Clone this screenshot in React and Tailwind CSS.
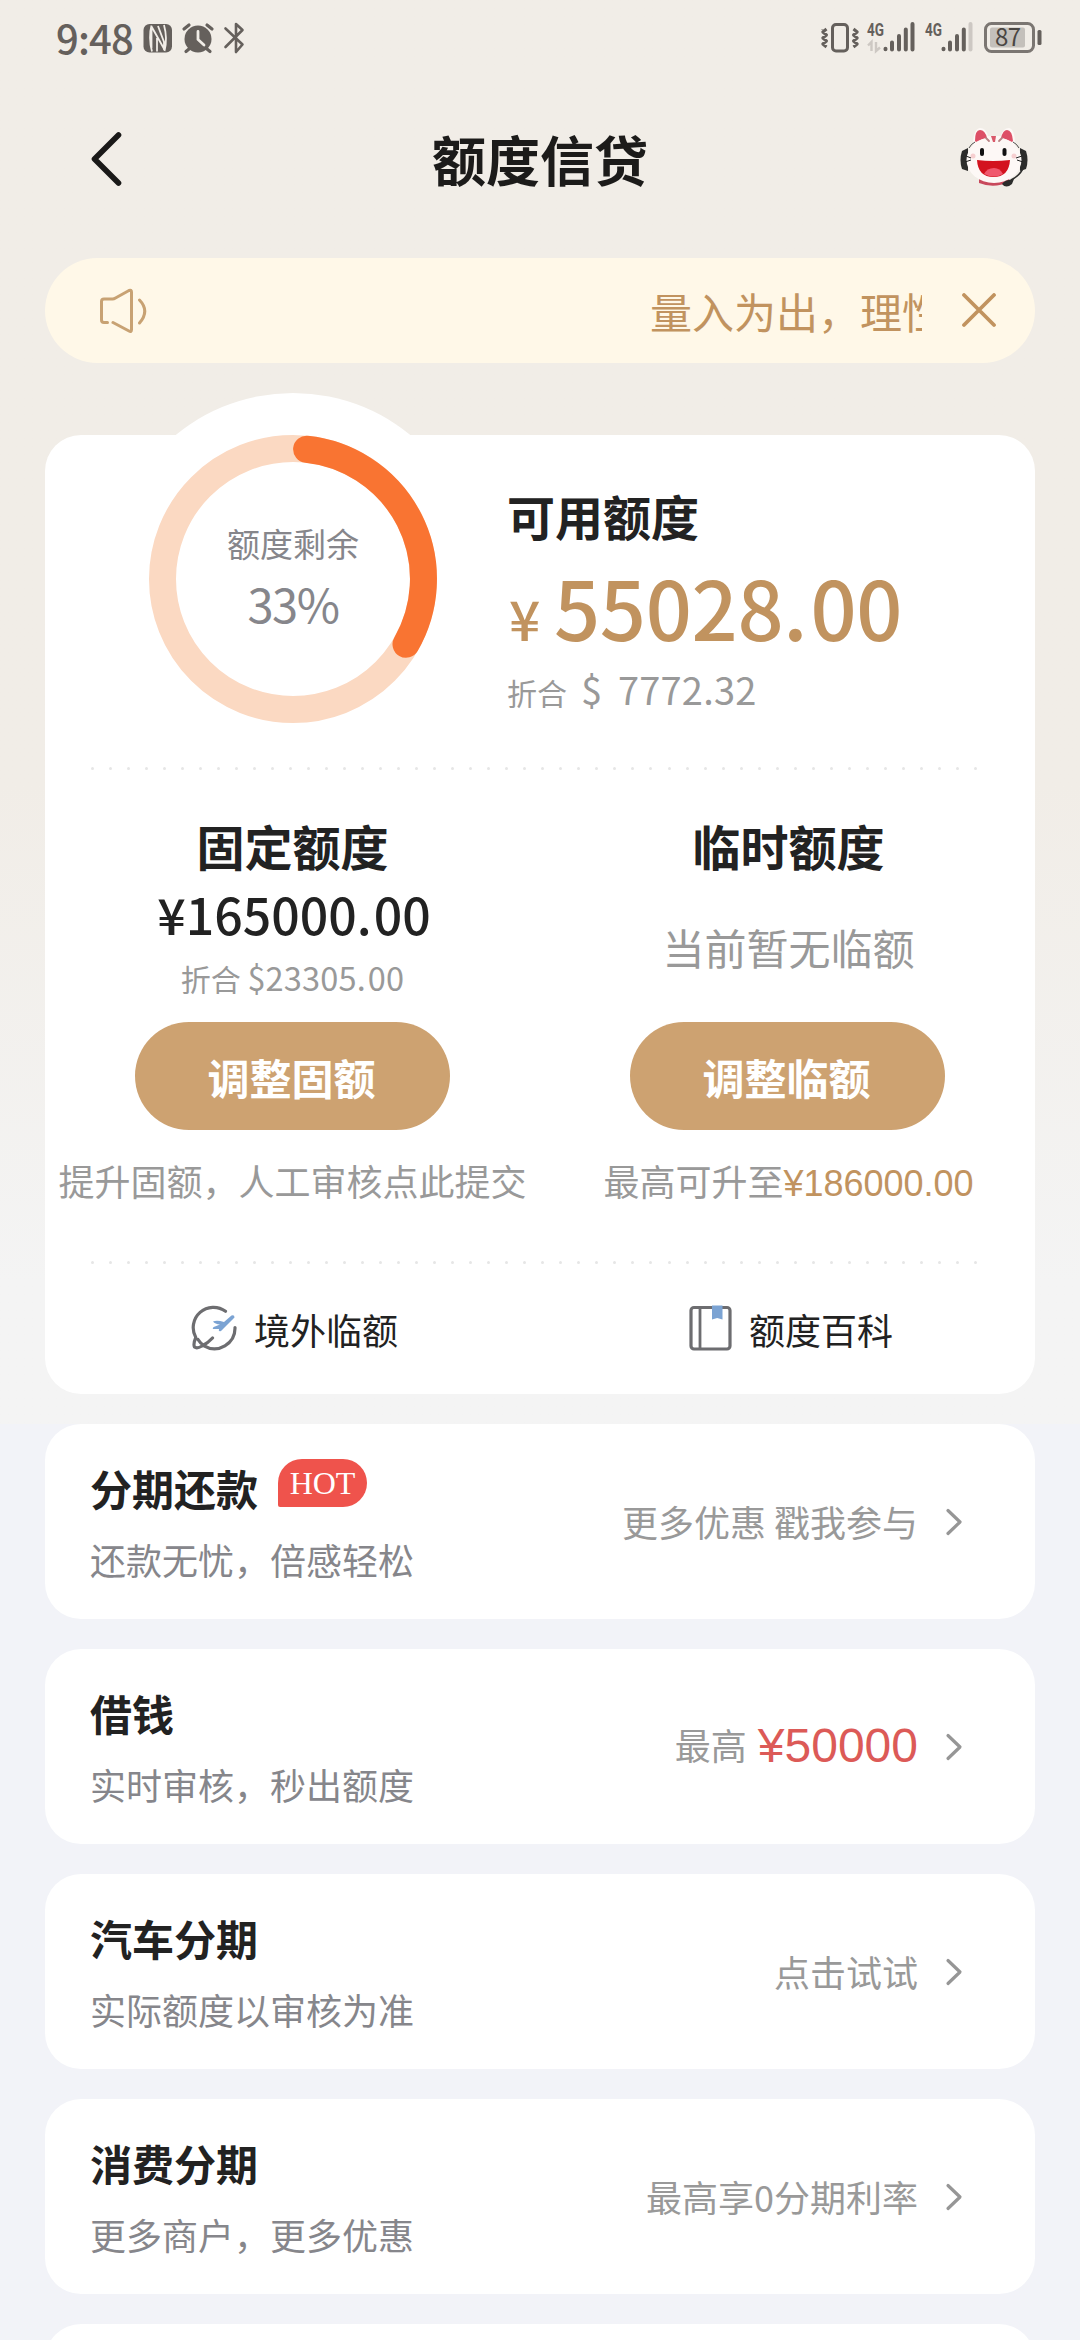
const CJK = "font-['Noto_Sans_CJK_SC',sans-serif]";

function StatusBar() {
  return (
    <div className="flex h-[76px] items-center pl-[56px] pr-[37px] text-[#65605c]">
      <span className="-mt-[2px] w-[87px] text-[40px] font-medium leading-[76px] tracking-[-0.8px]">9:48</span>
      <svg width="104" height="40" viewBox="0 0 104 40" fill="none" className="block">
        <rect x="0.5" y="6" width="28.5" height="28.5" rx="6" fill="#65605c" />
        <path d="M8.5 7.500C6.500 14 6.500 25 9 33.500M8.500 8.500L22 32.500M8.500 8.500V30M14 20V33.500M21 7C23.500 16 23.500 25 21.500 33M15 8L21 24V32" stroke="#f1ede7" strokeWidth="1.800" />
        <circle cx="55" cy="21" r="13.500" fill="#65605c" />
        <path d="M41 11L46 7M69 11L64 7M46 31L43 33.500M64 31L67 33.500" stroke="#65605c" strokeWidth="3.200" strokeLinecap="round" />
        <path d="M55 13.500V21.500L61 27" stroke="#f1ede7" strokeWidth="2.800" strokeLinecap="round" />
        <path d="M82.500 10.500L99.500 26.500L93 34V6L99.500 12L82.500 29" stroke="#65605c" strokeWidth="2.600" strokeLinejoin="round" strokeLinecap="round" />
      </svg>
      <svg width="223" height="40" viewBox="0 0 223 40" fill="none" className="ml-auto block">
        <rect x="12.500" y="6.500" width="15" height="26.500" rx="3.500" stroke="#65605c" strokeWidth="3" />
        <path d="M6.500 10L2.800 13L6.500 16L2.800 19L6.500 22L2.800 25L6.500 28M2.800 10.500V11M33.500 10L37.200 13L33.500 16L37.200 19L33.500 22L37.200 25L33.500 28" transform="translate(0 1)" stroke="#65605c" strokeWidth="3" strokeLinejoin="round" />
        <text x="47" y="18" fontSize="18.500" fontWeight="700" textLength="17" lengthAdjust="spacingAndGlyphs" fill="#65605c" fontFamily="Roboto">4G</text>
        <path d="M51.500 33V24L48 27.500M56 24V33L60 29.500" stroke="#cdc8c3" strokeWidth="2.400" />
        <path d="M65.500 30.800V31.200M72 24.500V31.500M79 18V31.500M85.800 11.500V31.500M92.500 6V31.500" stroke="#65605c" strokeWidth="4" strokeLinecap="round" />
        <text x="105" y="18" fontSize="18.500" fontWeight="700" textLength="17" lengthAdjust="spacingAndGlyphs" fill="#65605c" fontFamily="Roboto">4G</text>
        <path d="M123.500 30.800V31.200M130 24.500V31.500M137 18V31.500M143.800 11.500V31.500" stroke="#65605c" strokeWidth="4" strokeLinecap="round" />
        <path d="M150.500 6V31.500" stroke="#cdc8c3" strokeWidth="4" strokeLinecap="round" />
        <rect x="165.500" y="5.500" width="48" height="28" rx="6" stroke="#7b7672" strokeWidth="3" />
        <rect x="170" y="9.500" width="35" height="20" rx="2" fill="#c4c0bb" />
        <text x="175" y="28" fontSize="24" textLength="26" fill="#4a4643" fontFamily="Noto Sans CJK SC">87</text>
        <rect x="217.500" y="12" width="4" height="15" rx="1.500" fill="#65605c" />
      </svg>
    </div>
  );
}

function Mascot() {
  return (
    <svg width="70" height="64" viewBox="0 0 70 64" className="block">
      <path d="M3 25L9 22V45L3 43Q0 34 3 25Z" fill="#2c2c2b" />
      <path d="M67 25L61 22V45L67 43Q70 34 67 25Z" fill="#2c2c2b" />
      <path d="M14 20Q14 3 21 2Q27 2 29 10L42 10Q44 2 50 2Q56 3 56 20Z" fill="#fdf8f6" />
      <path d="M16 15Q16 4 21 4Q26 4 28 12Q22 13 17 16Z" fill="#dd4f66" />
      <path d="M54 15Q53 4 48 4Q44 4 42 12Q48 13 53 16Z" fill="#dd4f66" />
      <path d="M20 52Q34 60 50 52V56Q35 63 20 57Z" fill="#c8495c" />
      <ellipse cx="35" cy="34" rx="27.500" ry="23" fill="#fdf8f6" />
      <path d="M32 10H37L36 16H34Z" fill="#d9596a" />
      <path d="M27 12L30 15M43 12L40 15" stroke="#b98284" strokeWidth="1.800" strokeLinecap="round" />
      <rect x="21" y="22" width="4" height="8" rx="2" fill="#111" />
      <rect x="43.500" y="22" width="4" height="8" rx="2" fill="#111" />
      <circle cx="14" cy="30" r="2.500" fill="#f6cfd0" />
      <circle cx="55" cy="30" r="2.500" fill="#f6cfd0" />
      <path d="M18 34Q34 36 51 34Q50 51 34.500 51Q19 51 18 34Z" fill="#d3131f" />
      <path d="M25 48Q28 42 35 42Q41 42 44 48Q35 53 25 48Z" fill="#f0586d" />
      <path d="M7 30L12 32M6 36L12 34M63 30L57 32M64 36L58 34" stroke="#222" strokeWidth="1" />
      <path d="M10 22Q12 18 16 16M60 22Q58 18 54 16" stroke="#222" strokeWidth="0.800" fill="none" />
      <path d="M65 40Q62 49 52 54" stroke="#2c2c2b" strokeWidth="1.600" fill="none" />
      <path d="M43 58Q45 54 55 53L53 58Q47 63 43 58Z" fill="#2c2c2b" />
    </svg>
  );
}

function Header() {
  return (
    <header className="grid h-[182px] grid-cols-3 items-start pl-[90px] pr-[51px] pt-[50px]">
      <svg width="34" height="66" viewBox="0 0 34 66" fill="none" className="block">
        <path d="M28.500 9L4.500 33L28.500 57" stroke="#1a1918" strokeWidth="5.600" strokeLinecap="round" strokeLinejoin="round" />
      </svg>
      <h1 className="whitespace-nowrap pr-[39px] text-center text-[54px] font-bold leading-[66px] text-[#1c1b1a]">额度信贷</h1>
      <div className="flex justify-end">
        <Mascot />
      </div>
    </header>
  );
}

function Notice() {
  return (
    <div className="flex h-[105px] items-center rounded-full bg-[#fff8e8] pl-[53px] pr-[38px] text-[#c1935f]">
      <svg width="52" height="50" viewBox="0 0 52 50" fill="none" className="block shrink-0">
        <path d="M9.500 36.500H6Q3.500 36.500 3.500 34V15.500Q3.500 13 6 13H14.500Q16 13 17.500 12L31 4.500Q33.500 3.500 33.500 6V43.500Q33.500 46.500 31 45L15 36.500M41.500 14Q52 25 41.500 37" stroke="#c8a273" strokeWidth="3" strokeLinecap="round" strokeLinejoin="round" />
      </svg>
      <div className="ml-auto w-[272px] overflow-hidden whitespace-nowrap text-[42px] leading-[105px]">量入为出，理性消费</div>
      <svg width="36" height="36" viewBox="0 0 36 36" fill="none" className="ml-[39px] block shrink-0">
        <path d="M3 2L33 32M33 2L3 32" stroke="#c1935f" strokeWidth="3.800" strokeLinecap="round" />
      </svg>
    </div>
  );
}

function Ring() {
  return (
    <div className="relative h-[370px] w-[370px] shrink-0 rounded-full bg-white">
      <svg width="370" height="370" viewBox="0 0 370 370" fill="none" className="block">
        <circle cx="185" cy="186" r="130.500" stroke="#fbd9c2" strokeWidth="27" />
        <path d="M198.600 56.200A130.500 130.500 0 0 1 298 251.200" stroke="#f97432" strokeWidth="27" strokeLinecap="round" />
      </svg>
      <div className="absolute inset-0 text-center text-[#86868b]">
        <div className="pt-[122px] text-[33px] leading-[56px]">额度剩余</div>
        <div className="text-[47px] leading-[64px] tracking-[-1.5px]">33%</div>
      </div>
    </div>
  );
}

function Dots() {
  return (
    <div className="flex h-[4px] w-[886px] items-center justify-between">
      {Array.from({ length: 50 }, (_, i) => (
        <span key={i} className="size-[3px] rounded-full bg-[#e6e6e6]" />
      ))}
    </div>
  );
}

function Pill({ children }) {
  return (
    <button className="block h-[108px] w-[315px] rounded-full bg-[#cda271] pr-[2px] text-[42px] font-bold leading-[105px] text-white">
      {children}
    </button>
  );
}

function LimitCard() {
  return (
    <section className="mt-[72px] h-[959px] rounded-[36px] bg-white">
      <div className="flex h-[331px] pl-[63px]">
        <div className="-mt-[42px]">
          <Ring />
        </div>
        <div className="whitespace-nowrap pl-[29px] pt-[48px]">
          <div className="text-[48px] font-bold leading-[64px] text-[#222]">可用额度</div>
          <div className="mt-[4px] flex h-[110px] items-baseline text-[#c1935f]">
            <span className="w-[47px] pl-[2px] text-[55px] font-medium leading-[110px]">¥</span>
            <span className="text-[81px] font-medium leading-[110px] tracking-[-0.3px]">
              55028<span className="tracking-[3px]">.</span>00
            </span>
          </div>
          <div className="flex items-baseline text-[#999]">
            <span className="w-[74px] text-[30px] leading-[56px]">折合</span>
            <span className="w-[37px] text-[38px] leading-[56px]">$</span>
            <span className="text-[38px] leading-[56px] tracking-[0.2px]">7772.32</span>
          </div>
        </div>
      </div>
      <div className="flex justify-center pr-[12px]">
        <Dots />
      </div>
      <div className="grid h-[490px] grid-cols-2 whitespace-nowrap text-[#999]">
        <div className="flex flex-col items-center">
          <div className="mt-[43px] text-[48px] font-bold leading-[64px] text-[#222]">固定额度</div>
          <div className="h-[71px] pl-[3px] text-[50px] font-medium leading-[72px] text-[#222]">
            ¥165000<span className="tracking-[2px]">.</span>00
          </div>
          <div className="h-[55px] leading-[57px]">
            <span className="text-[30px]">折合 </span>
            <span className="text-[32.500px] tracking-[0.2px]">$23305<span className="tracking-[2px]">.</span>00</span>
          </div>
          <div className="mt-[19px]">
            <Pill>调整固额</Pill>
          </div>
          <div className="mt-[23px] text-[36px] leading-[55px]">提升固额，人工审核点此提交</div>
        </div>
        <div className="flex flex-col items-center">
          <div className="mt-[43px] pl-[2px] text-[48px] font-bold leading-[64px] text-[#222]">临时额度</div>
          <div className="h-[126px] pl-[2px] pt-[38px] text-[42px] leading-[64px]">当前暂无临额</div>
          <div className="mt-[19px]">
            <Pill>调整临额</Pill>
          </div>
          <div className="mt-[23px] pl-[2px] text-[36px] leading-[55px]">
            最高可升至<span className="font-['Liberation_Sans',sans-serif] text-[#c1935f]">¥186000.00</span>
          </div>
        </div>
      </div>
      <div className="flex justify-center pr-[12px]">
        <Dots />
      </div>
      <div className="grid h-[130px] grid-cols-2 text-[36px] text-[#222]">
        <div className="flex items-center justify-center gap-[16px] pl-[3px]">
          <svg width="48" height="48" viewBox="0 0 48 48" fill="none" className="block">
            <path d="M35.500 6.200A20.300 20.300 0 0 0 5.800 32.500Q3 39 4.500 42Q7 44 12 41Q18 38 22.500 33M14 40.800A20.600 20.600 0 0 0 45 22.500M8 34.500Q10 38 14 40.500" stroke="#6d6d70" strokeWidth="3.200" strokeLinecap="round" strokeLinejoin="round" />
            <path d="M23 16.500Q27 15 34 17L41.500 10.500Q44.500 9.500 44.500 12.500L37 20L31 26Q28 27 29 24L23 24Q22 22.500 25 21.500L30 19.500Q25 19 23 16.500Z" fill="#7ba3d3" />
          </svg>
          <span className="leading-[56px]">境外临额</span>
        </div>
        <div className="flex items-center justify-center gap-[16px] pl-[3px]">
          <svg width="48" height="48" viewBox="0 0 48 48" fill="none" className="block">
            <rect x="6" y="2.500" width="39" height="41.500" rx="3" stroke="#6d6d70" strokeWidth="3.200" />
            <path d="M15 2.500V44" stroke="#6d6d70" strokeWidth="2.800" />
            <path d="M27 0.500H37.500V14.500L32.200 13L27 14.500Z" fill="#7ba3d3" />
          </svg>
          <span className="leading-[56px]">额度百科</span>
        </div>
      </div>
    </section>
  );
}

function Row({ title, hot, subtitle, children }) {
  return (
    <section className="flex h-[195px] shrink-0 rounded-[36px] bg-white pl-[45px] pr-[71px]">
      <div className="whitespace-nowrap pt-[32px]">
        <div className="flex h-[64px] items-start">
          <span className="text-[42px] font-bold leading-[64px] text-[#222]">{title}</span>
          {hot && (
            <span className="ml-[20px] mt-[3px] h-[48px] w-[89px] rounded-[24px] rounded-bl-[2px] bg-[#ef534c] text-center font-['Liberation_Serif',serif] text-[32px] leading-[48px] text-white">
              HOT
            </span>
          )}
        </div>
        <div className="mt-[10px] text-[36px] leading-[58px] text-[#86868b]">{subtitle}</div>
      </div>
      <div className="ml-auto flex items-center whitespace-nowrap text-[36px] leading-[56px] text-[#999]">
        <div className="-mt-[2px] flex items-center">{children}</div>
        <svg width="20" height="30" viewBox="0 0 20 30" fill="none" className="ml-[26px] block">
          <path d="M4 3.500L16 15L4 26.500" stroke="#969696" strokeWidth="3.200" strokeLinecap="round" strokeLinejoin="round" />
        </svg>
      </div>
    </section>
  );
}

export default function App() {
  return (
    <div className={`${CJK} relative h-[2340px] w-[1080px] overflow-hidden bg-[#f2f3f8]`} lang="zh-CN">
      <div className="absolute inset-x-0 top-0 h-[1424px] bg-linear-to-b from-[#f1ede7] from-55% to-[#f4f4f4] to-90%" />
      <div className="relative">
        <StatusBar />
        <Header />
        <main className="px-[45px]">
          <Notice />
          <LimitCard />
          <div className="mt-[30px] flex flex-col gap-[30px]">
            <Row title="分期还款" hot subtitle="还款无忧，倍感轻松">更多优惠 戳我参与</Row>
            <Row title="借钱" subtitle="实时审核，秒出额度">
              <span className="-mt-[4px]">最高</span>
              <span className="ml-[11px] font-['Liberation_Sans',sans-serif] text-[48px] text-[#dc5a57]">¥50000</span>
            </Row>
            <Row title="汽车分期" subtitle="实际额度以审核为准">点击试试</Row>
            <Row title="消费分期" subtitle="更多商户，更多优惠">最高享0分期利率</Row>
            <Row />
          </div>
        </main>
      </div>
    </div>
  );
}
